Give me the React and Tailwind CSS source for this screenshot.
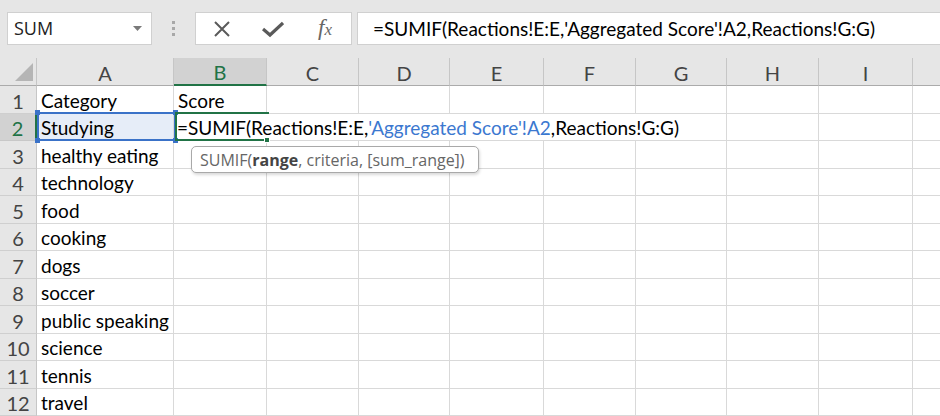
import React from "react";

const COLS = [
  { k: "A", w: 138 },
  { k: "B", w: 93 },
  { k: "C", w: 92 },
  { k: "D", w: 91 },
  { k: "E", w: 94 },
  { k: "F", w: 92 },
  { k: "G", w: 91 },
  { k: "H", w: 92 },
  { k: "I", w: 94 },
  { k: "", w: 60 },
];

const DATA = [
  "Category",
  "Studying",
  "healthy eating",
  "technology",
  "food",
  "cooking",
  "dogs",
  "soccer",
  "public speaking",
  "science",
  "tennis",
  "travel",
];

const cellFont = { fontFamily: "Lato, 'Open Sans', sans-serif" };

function Formula({ blue }) {
  return (
    <>
      =SUMIF(Reactions!E:E,
      <span className={blue ? "text-[#3b78d0]" : ""}>'Aggregated Score'!A2</span>
      ,Reactions!G:G)
    </>
  );
}

function Row({ n }) {
  const selRow = n === 2;
  return (
    <div className="flex h-[27.5px] shrink-0" style={cellFont}>
      <div
        className={
          "w-[37px] shrink-0 flex items-center justify-center pt-[3px] border-b text-[20px] " +
          (selRow
            ? "bg-[#d2d2d2] text-[#217346] border-b-[#c8c8c8] border-r-2 border-r-[#217346]"
            : "bg-[#e6e6e6] text-[#444] border-b-[#cfcfcf] border-r border-r-[#c6c6c6]")
        }
      >
        {n}
      </div>
      {n === 2 ? (
        <>
          <div className="w-[137px] shrink-0 flex items-center pl-[4px] pt-[3px] border-r border-b border-[#d9d9d9] bg-[#e6edf8] text-[19px] text-black">
            {DATA[1]}
          </div>
          <div className="w-[553px] shrink-0 flex items-center pl-[3px] pt-[3px] border-r border-b border-[#d9d9d9] text-[19px] text-black whitespace-nowrap">
            <Formula blue />
          </div>
          {COLS.slice(7).map((c) => (
            <div
              key={c.k + "x"}
              className="shrink-0 border-r border-b border-[#d9d9d9]"
              style={{ width: c.w }}
            />
          ))}
        </>
      ) : (
        COLS.map((c, i) => (
          <div
            key={c.k + i}
            className="shrink-0 flex items-center pl-[4px] pt-[3px] border-r border-b border-[#d9d9d9] text-[19px] text-black whitespace-nowrap overflow-visible"
            style={{ width: i === 0 ? c.w - 1 : c.w }}
          >
            {i === 0 ? DATA[n - 1] : i === 1 && n === 1 ? "Score" : ""}
          </div>
        ))
      )}
    </div>
  );
}

export default function App() {
  return (
    <div className="w-[940px] h-[416px] overflow-hidden bg-white flex flex-col">
      {/* formula bar */}
      <div className="h-[58px] shrink-0 bg-[#e6e6e6] flex items-start pt-[12px] pl-[7px]">
        <div
          className="w-[145px] h-[33px] bg-white border border-[#d0d0d0] flex items-center justify-between pl-[6px] pr-[9px] text-[18px] text-[#222]"
          style={{ fontFamily: "'Open Sans', sans-serif" }}
        >
          <span>SUM</span>
          <svg width="9" height="5" viewBox="0 0 9 5">
            <path d="M0 0 L9 0 L4.5 5 Z" fill="#7a7a7a" />
          </svg>
        </div>
        <div className="w-[43px] h-[33px] flex flex-col items-center justify-center gap-[3px]">
          <div className="w-[3px] h-[3px] bg-[#a8a8a8]" />
          <div className="w-[3px] h-[3px] bg-[#a8a8a8]" />
          <div className="w-[3px] h-[3px] bg-[#a8a8a8]" />
        </div>
        <div className="w-[157px] h-[33px] bg-white border border-[#d0d0d0] flex items-center">
          <div className="w-[50px] flex justify-center pl-[2px]">
            <svg width="18" height="18" viewBox="0 0 18 18">
              <path d="M2 2 L16 16 M16 2 L2 16" stroke="#5a5a5a" strokeWidth="2" />
            </svg>
          </div>
          <div className="w-[54px] flex justify-center">
            <svg width="22" height="18" viewBox="0 0 22 18">
              <path d="M1 9 L8 15 L21 3" stroke="#5a5a5a" strokeWidth="3.2" fill="none" strokeLinejoin="miter" />
            </svg>
          </div>
          <div
            className="w-[50px] flex justify-center items-baseline text-[23px] italic text-[#666]"
            style={{ fontFamily: "'Liberation Serif', serif" }}
          >
            f<span className="text-[17px]">x</span>
          </div>
        </div>
        <div
          className="ml-[5px] flex-1 h-[33px] bg-white border border-[#d0d0d0] border-r-0 flex items-center pl-[15px] pt-[2px] text-[19px] text-black whitespace-nowrap"
          style={cellFont}
        >
          <Formula />
        </div>
      </div>

      {/* grid */}
      <div className="relative flex-1 flex flex-col">
        {/* header row */}
        <div className="flex h-[28px] shrink-0 bg-[#e6e6e6]" style={cellFont}>
          <div className="w-[37px] shrink-0 relative border-r border-b border-r-[#c6c6c6] border-b-[#ababab]">
            <svg className="absolute left-[15px] top-[5px]" width="18" height="18" viewBox="0 0 18 18">
              <path d="M18 0 L18 18 L0 18 Z" fill="#b5b5b5" />
            </svg>
          </div>
          {COLS.map((c, i) => (
            <div
              key={c.k + i}
              className={
                "shrink-0 flex items-center justify-center pt-[2px] text-[20px] border-r border-r-[#c6c6c6] " +
                (c.k === "B"
                  ? "bg-[#d2d2d2] text-[#217346] border-b-2 border-b-[#217346]"
                  : "text-[#444] border-b border-b-[#ababab]")
              }
              style={{ width: i === 0 ? c.w - 1 : c.w }}
            >
              {c.k}
            </div>
          ))}
        </div>
        {DATA.map((_, i) => (
          <Row key={i} n={i + 1} />
        ))}

        {/* blue reference range on A2 */}
        <div className="absolute left-[37px] top-[54px] w-[139px] h-[29px] border-2 border-[#3a72c8]" />
        <div className="absolute left-[35px] top-[52px] w-[5px] h-[5px] bg-[#3a72c8]" />
        <div className="absolute left-[173px] top-[52px] w-[5px] h-[5px] bg-[#3a72c8]" />
        <div className="absolute left-[35px] top-[80px] w-[5px] h-[5px] bg-[#3a72c8]" />
        <div className="absolute left-[173px] top-[80px] w-[5px] h-[5px] bg-[#3a72c8]" />

        {/* active cell B2 */}
        <div className="absolute left-[175px] top-[54px] w-[94px] h-[2px] bg-[#217346]" />
        <div className="absolute left-[175px] top-[54px] w-[2px] h-[29px] bg-[#217346]" />
        <div className="absolute left-[175px] top-[81px] w-[90px] h-[2px] bg-[#217346]" />
        <div className="absolute left-[264px] top-[79px] w-[6px] h-[6px] bg-[#217346] border border-white" />

        {/* tooltip */}
        <div
          className="absolute left-[191px] top-[88px] h-[27px] w-[288px] bg-white border border-[#a9a9a9] rounded-[5px] shadow-[1px_2px_3px_rgba(0,0,0,0.15)] flex items-center pl-[8px] text-[16px] text-[#666] whitespace-nowrap"
          style={{ fontFamily: "'Open Sans', sans-serif" }}
        >
          SUMIF(<span className="font-bold text-[#444]">range</span>, criteria, [sum_range])
        </div>
      </div>
    </div>
  );
}
